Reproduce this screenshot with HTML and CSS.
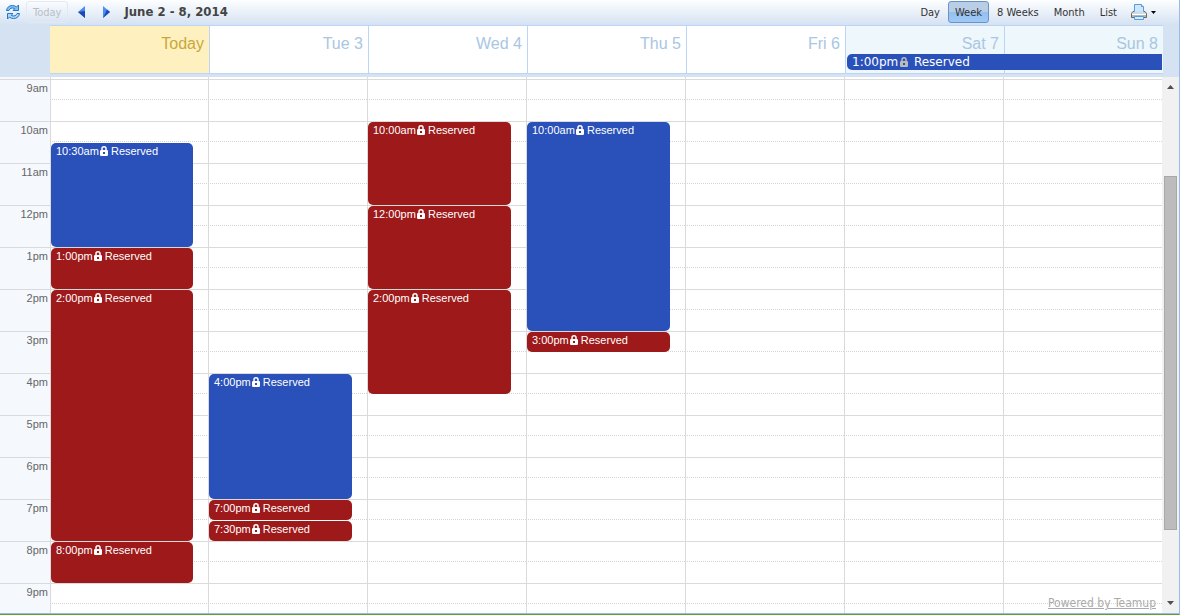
FILE: index.html
```html
<!DOCTYPE html>
<html lang="en">
<head>
    <meta charset="UTF-8">
    <meta name="viewport" content="width=device-width, initial-scale=1.0">
    <title>Calendar</title>
    <link rel="stylesheet" href="styles.css">
</head>
<body>
    <svg width="0" height="0" class="defs">
        <symbol id="lock" viewBox="0 0 8 10">
            <path d="M2 5V2.600Q2 .8 4 .8T6 2.600V5" fill="none" stroke="currentColor" stroke-width="1.5"/>
            <path fill-rule="evenodd" d="M.8 4h6.400L8 4.800v4.400l-.8.8H.8L0 9.200V4.800zM3 6v2h2V6z" fill="currentColor"/>
        </symbol>
    </svg>
    <div class="calendar">
        <div class="toolbar">
            <button class="icon-btn" aria-label="Refresh">
                <svg width="16" height="16" viewBox="0 0 16 16">
                    <path d="M1.500 6.500Q2.500 1.500 7.500 1.500q2.500 0 4 1.500L13.500 1v5.500H8l1.800-1.800Q8 3.500 6 4.200 4.500 5 4 6.500z" fill="#7cc4f5" stroke="#2b74c4"/>
                    <path d="M14.500 9.500Q13.500 14.500 8.500 14.500q-2.500 0-4-1.500L2.500 15V9.500H8l-1.800 1.800q1.800 1.200 3.800.5 1.500-.8 2-2.300z" fill="#a6daf9" stroke="#2b74c4"/>
                </svg>
            </button>
            <button class="today-btn" disabled>Today</button>
            <button class="icon-btn" aria-label="Previous week">
                <svg width="7" height="12" viewBox="0 0 7 12"><path d="M7 0v12L0 6z" fill="#4b8df0"/><path d="M7 5v7L0 6z" fill="#1b48b4"/></svg>
            </button>
            <button class="icon-btn next" aria-label="Next week">
                <svg width="7" height="12" viewBox="0 0 7 12"><path d="M0 0v12l7-6z" fill="#4b8df0"/><path d="M0 12l7-6-3-2.500z" fill="#1b48b4"/></svg>
            </button>
            <span class="title">June 2 - 8, 2014</span>
            <div class="views">
                <button>Day</button>
                <button class="active">Week</button>
                <button>8 Weeks</button>
                <button>Month</button>
                <button>List</button>
                <button class="print" aria-label="Print">
                    <svg width="16" height="16" viewBox="0 0 16 16">
                        <path d="M3.500 9V.5h7l2 2V9z" fill="#cfe6fb" stroke="#5b9ad8"/>
                        <path d="M10.500.5v2h2" fill="#fff" stroke="#5b9ad8"/>
                        <path d="M2 7.500h12l1.500 2v4H.5v-4z" fill="#d5d5d5" stroke="#666"/>
                        <path d="M3.500 7h9v2.500h-9z" fill="#c3e0fa"/>
                        <path d="M1 10.500h14" stroke="#fff"/>
                        <path d="M1 12h14" stroke="#999"/>
                        <path d="M3.500 12.500h9v3h-9z" fill="#d9ecfd" stroke="#5b9ad8"/>
                    </svg>
                    <svg width="5" height="3" viewBox="0 0 5 3"><path d="M0 0h5L2.500 3z" fill="#000"/></svg>
                </button>
            </div>
        </div>

        <div class="header">
            <div class="day today">Today</div>
            <div class="day">Tue 3</div>
            <div class="day">Wed 4</div>
            <div class="day">Thu 5</div>
            <div class="day">Fri 6</div>
            <div class="day weekend">Sat 7</div>
            <div class="day weekend">Sun 8</div>
            <div class="allday">1:00pm <svg class="lock" width="8" height="10"><use href="#lock"/></svg> Reserved</div>
        </div>

        <div class="body">
            <div class="hours">
                <div>9am</div>
                <div>10am</div>
                <div>11am</div>
                <div>12pm</div>
                <div>1pm</div>
                <div>2pm</div>
                <div>3pm</div>
                <div>4pm</div>
                <div>5pm</div>
                <div>6pm</div>
                <div>7pm</div>
                <div>8pm</div>
                <div>9pm</div>
            </div>
            <div class="days">
                <div class="col">
                    <div class="event blue" style="--start: 10.5; --hours: 2.5">10:30am <svg class="lock" width="8" height="10"><use href="#lock"/></svg> Reserved</div>
                    <div class="event red" style="--start: 13; --hours: 1">1:00pm <svg class="lock" width="8" height="10"><use href="#lock"/></svg> Reserved</div>
                    <div class="event red" style="--start: 14; --hours: 6">2:00pm <svg class="lock" width="8" height="10"><use href="#lock"/></svg> Reserved</div>
                    <div class="event red" style="--start: 20; --hours: 1">8:00pm <svg class="lock" width="8" height="10"><use href="#lock"/></svg> Reserved</div>
                </div>
                <div class="col">
                    <div class="event blue" style="--start: 16; --hours: 3">4:00pm <svg class="lock" width="8" height="10"><use href="#lock"/></svg> Reserved</div>
                    <div class="event red" style="--start: 19; --hours: 0.5">7:00pm <svg class="lock" width="8" height="10"><use href="#lock"/></svg> Reserved</div>
                    <div class="event red" style="--start: 19.5; --hours: 0.5">7:30pm <svg class="lock" width="8" height="10"><use href="#lock"/></svg> Reserved</div>
                </div>
                <div class="col">
                    <div class="event red" style="--start: 10; --hours: 2">10:00am <svg class="lock" width="8" height="10"><use href="#lock"/></svg> Reserved</div>
                    <div class="event red" style="--start: 12; --hours: 2">12:00pm <svg class="lock" width="8" height="10"><use href="#lock"/></svg> Reserved</div>
                    <div class="event red" style="--start: 14; --hours: 2.5">2:00pm <svg class="lock" width="8" height="10"><use href="#lock"/></svg> Reserved</div>
                </div>
                <div class="col">
                    <div class="event blue" style="--start: 10; --hours: 5">10:00am <svg class="lock" width="8" height="10"><use href="#lock"/></svg> Reserved</div>
                    <div class="event red" style="--start: 15; --hours: 0.5">3:00pm <svg class="lock" width="8" height="10"><use href="#lock"/></svg> Reserved</div>
                </div>
                <div class="col"></div>
                <div class="col"></div>
                <div class="col"></div>
                <a class="powered" href="#">Powered by Teamup</a>
            </div>
            <div class="scrollbar">
                <svg width="7" height="4" viewBox="0 0 7 4"><path d="M0 4h7L3.500 0z" fill="#505050"/></svg>
                <div class="track"><div class="thumb"></div></div>
                <svg width="7" height="4" viewBox="0 0 7 4"><path d="M0 0h7L3.500 4z" fill="#505050"/></svg>
            </div>
        </div>
    </div>
</body>
</html>
```
FILE: styles.css
```css
* {
    box-sizing: border-box;
}
body {
    margin: 0;
    height: 100vh;
    background: #fff;
    font-family: "Liberation Sans", Arial, sans-serif;
    font-size: 11px;
}
button {
    font-family: Tahoma, "DejaVu Sans Condensed", "Noto Sans", sans-serif;
    font-size: 11px;
    line-height: 16px;
    color: #333;
    background: none;
    border: 1px solid transparent;
    border-radius: 3px;
    padding: 3px 5px 1px;
    white-space: nowrap;
    cursor: pointer;
}
.defs {
    position: absolute;
}
.calendar {
    height: 100%;
    display: flex;
    flex-direction: column;
    border-right: 1px solid #99bbe8;
    border-bottom: 1px solid #6b9a35;
}

/* toolbar */
.toolbar {
    height: 25px;
    flex: none;
    display: flex;
    align-items: center;
    padding: 0 16px 1px 5px;
    background: linear-gradient(#fdfeff, #d5e2f2);
}
.icon-btn {
    display: flex;
    padding: 0;
    border: none;
}
.today-btn {
    margin: 0 10px 0 5px;
    padding: 3px 6px 1px;
    border-color: #e3e9f1;
    color: #b9bec6;
    cursor: default;
}
.next {
    margin: 0 14px 0 18px;
}
.title {
    font: bold 13px/18px Tahoma, "DejaVu Sans Condensed", Verdana, sans-serif;
    color: #444;
}
.views {
    display: flex;
    gap: 1px;
    margin-left: auto;
}
.views button {
    padding: 3px 6px 1px;
}
.views .active {
    border-color: #6a93c4;
    background: linear-gradient(#b8cde6 50%, #93bff0 50%, #9fc9f7);
}
.views .print {
    display: flex;
    align-items: center;
    gap: 4px;
    padding: 2px 6px 2px 5px;
}

/* day names and all day events */
.header {
    flex: none;
    display: grid;
    grid-template-columns: repeat(7, 1fr);
    grid-template-rows: 29px 16px 4px;
    padding: 0 16px 3px 50px;
    background: #d5e2f2;
}
.day {
    grid-row: 1 / 4;
    padding: 8px 5px 0 0;
    border: solid #bcd4f8;
    border-width: 1px 0 1px 1px;
    background: #fff;
    font-size: 16px;
    line-height: 20px;
    text-align: right;
    color: #a9c6e2;
}
.day:nth-child(1) { grid-column: 1; border-left: none; }
.day:nth-child(2) { grid-column: 2; }
.day:nth-child(3) { grid-column: 3; }
.day:nth-child(4) { grid-column: 4; }
.day:nth-child(5) { grid-column: 5; }
.day:nth-child(6) { grid-column: 6; }
.day:nth-child(7) { grid-column: 7; }
.today {
    background: #fff1bf;
    color: #c8a73c;
}
.weekend {
    background: #eef7fb;
}
.allday {
    grid-column: 6 / 8;
    grid-row: 2;
    z-index: 1;
    margin: 0 1px 0 2px;
    padding-left: 5px;
    border-radius: 5px 0 0 5px;
    background: #2951b9;
    color: #fff;
    font: 12px/16px "DejaVu Sans", Verdana, sans-serif;
}
.allday .lock {
    margin: 0 2px 0 -2px;
    color: #bbb;
}

/* time grid, 42px per hour */
.body {
    flex: 1;
    min-height: 0;
    display: flex;
    overflow: hidden;
    border-bottom: 1px solid #99bbe8;
}
.hours {
    width: 50px;
    flex: none;
    margin-right: -1px;
    padding-top: 2px;
    background: #f5f9fd;
    color: #666;
    text-align: right;
}
.hours div {
    height: 42px;
    padding: 1px 2px 0 0;
    border-top: 1px solid #dadada;
    line-height: 14px;
}
.days {
    flex: 1;
    display: grid;
    grid-template-columns: repeat(7, 1fr);
    position: relative;
}
.col {
    position: relative;
    border-left: 1px solid #dadada;
    background:
        repeating-linear-gradient(#dadada 0 1px, transparent 1px 42px) 0 2px,
        repeating-linear-gradient(90deg, #fff 0 1px, transparent 1px 2px),
        repeating-linear-gradient(transparent 0 20px, #d4d4d4 20px 21px, transparent 21px 42px) 0 2px,
        #fff;
}
.col:first-child {
    margin-left: 1px;
}
.event {
    position: absolute;
    left: 0;
    top: calc((var(--start) - 9) * 42px + 3px);
    width: calc(90% + 1px);
    height: calc(var(--hours) * 42px - 1px);
    padding: 1px 5px;
    border-radius: 5px;
    color: #fff;
    line-height: 14px;
    white-space: nowrap;
    overflow: hidden;
}
.red {
    background: #9e1919;
}
.blue {
    background: #2951b9;
}
.lock {
    vertical-align: -1px;
}
.event .lock {
    margin: 0 0 0 -2px;
}
.powered {
    position: absolute;
    right: 6px;
    bottom: 2px;
    font: 12px/16px Tahoma, "DejaVu Sans Condensed", "Noto Sans", sans-serif;
    color: #aaa;
}

.scrollbar {
    width: 17px;
    flex: none;
    display: flex;
    flex-direction: column;
    align-items: center;
    padding: 8px 0;
    background: #f1f1f1;
}
.track {
    flex: 1;
    width: 13px;
    padding: 87px 0 71px;
}
.thumb {
    height: 100%;
    background: #bcbcbc;
    border: 1px solid #a8a8a8;
}
```
